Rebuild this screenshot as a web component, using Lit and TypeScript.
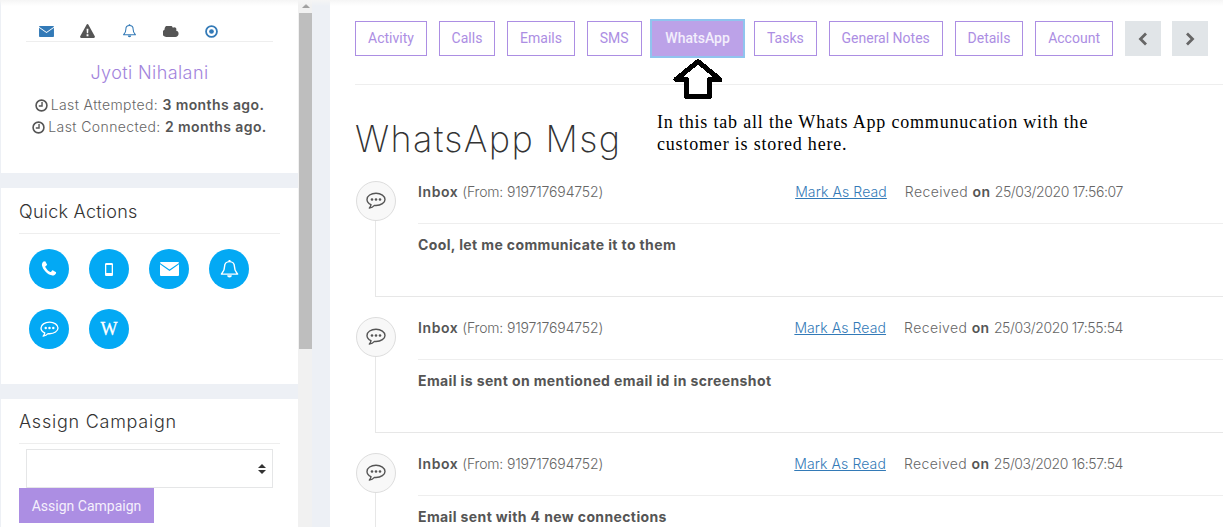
import { LitElement, html, css } from "lit";
import { customElement } from "lit/decorators.js";

const FA = {
  phone: "M1600 1240q0 27-10 70.5t-21 68.5q-21 50-122 106-94 51-186 51-27 0-53-3.5t-57.5-12.5-47-14.5-55.5-20.5-49-18q-98-35-175-83-127-79-264-216t-216-264q-48-77-83-175-3-9-18-49t-20.5-55.5-14.5-47-12.5-57.5-3.5-53q0-92 51-186 56-101 106-122 25-11 68.5-21t70.5-10q14 0 21 3 18 6 53 76 11 19 30 54t35 63.5 31 53.5q3 4 17.5 25t21.5 35.5 7 28.5q0 20-28.5 50t-62 55-62 53-28.5 46q0 9 5 22.5t8.5 20.5 14 24 11.5 19q76 137 174 235t235 174q2 1 19 11.5t24 14 20.5 8.5 22.5 5q18 0 46-28.5t53-62 55-62 50-28.5q14 0 28.5 7t35.5 21.5 25 17.5q25 15 53.5 31t63.5 35 54 30q70 35 76 53 3 7 3 21z",
  cloud: "M1792 1152q0 159-112.5 271.5t-271.5 112.5h-1088q-185 0-316.5-131.5t-131.5-316.5q0-132 71-241.5t187-163.5q-2-28-2-43 0-212 150-362t362-150q158 0 286.5 88t187.5 230q70-62 166-62 106 0 181 75t75 181q0 75-41 138 129 30 213 134.5t84 239.5z",
};

const envelope = (cls: string) => html`<svg class=${cls} viewBox="0 0 19 14"><path fill="currentColor" d="M1 0H18a1 1 0 0 1 1 1L9.500 7.600 0 1a1 1 0 0 1 1-1zM0 2.300L9.500 8.900 19 2.300V13a1 1 0 0 1-1 1H1a1 1 0 0 1-1-1z"></path></svg>`;
const phone = html`<svg class="qi" viewBox="0 0 1792 1792"><path fill="currentColor" d=${FA.phone}></path></svg>`;
const cloud = html`<svg class="tc" viewBox="0 250 1792 1300"><path fill="currentColor" d=${FA.cloud}></path></svg>`;
const bell = (cls: string) => html`<svg class=${cls} viewBox="0 0 20 20"><path fill="none" stroke="currentColor" stroke-width="1.500" stroke-linejoin="round" d="M10 2.200c-3.200 0-5.200 2.400-5.200 5.200 0 5-2.600 6.800-3.300 8h17c-.7-1.200-3.300-3-3.300-8 0-2.800-2-5.200-5.200-5.200z"></path><path fill="currentColor" d="M9 .5h2v2.200H9zM7.500 16.500h5a2.500 2.500 0 0 1-5 0z"></path></svg>`;
const warning = html`<svg class="ti" viewBox="0 0 16 15"><path fill="currentColor" fill-rule="evenodd" d="M8 0c.5 0 .8.300 1 .7l6.800 12.500c.4.800-.1 1.800-1 1.800H1.200c-.9 0-1.400-1-1-1.800L7 .7C7.200.300 7.500 0 8 0zM7 5l.3 5h1.400L9 5zM7 11v2h2v-2z"></path></svg>`;
const dot = html`<svg class="td" viewBox="0 0 16 16"><circle cx="8" cy="8" r="6.700" fill="none" stroke="currentColor" stroke-width="2.200"></circle><circle cx="8" cy="8" r="2.900" fill="currentColor"></circle></svg>`;
const clock = html`<svg class="clock" viewBox="0 0 12 12"><circle cx="6" cy="6" r="5" fill="none" stroke="currentColor" stroke-width="1.500"></circle><path d="M6.500 2.700v3.800H3.500" fill="none" stroke="currentColor" stroke-width="1.300"></path></svg>`;
const mobile = html`<svg class="mob" viewBox="0 0 8 13"><path fill="currentColor" fill-rule="evenodd" d="M1.300 0h5.400C7.400 0 8 .6 8 1.300v10.400c0 .7-.6 1.300-1.300 1.300H1.300C.6 13 0 12.400 0 11.700V1.300C0 .6.600 0 1.300 0zM1.300 2v8h5.400V2z"></path></svg>`;
const comment = (cls: string) => html`<svg class=${cls} viewBox="0 0 20 18"><path fill="none" stroke="currentColor" stroke-width="1.400" stroke-linejoin="round" d="M10 1.200c-5 0-9 2.800-9 6.200 0 2.200 1.600 4.100 4 5.200-.2 1.400-.8 2.500-1.700 3.500 2-.3 3.900-1.300 5.100-2.700.5.100 1 .1 1.600.1 5 0 9-2.800 9-6.100s-4-6.200-9-6.200z"></path><circle cx="6" cy="7.500" r="1.300" fill="currentColor"></circle><circle cx="10" cy="7.500" r="1.300" fill="currentColor"></circle><circle cx="14" cy="7.500" r="1.300" fill="currentColor"></circle></svg>`;

const tabs = ["Activity", "Calls", "Emails", "SMS", "WhatsApp", "Tasks", "General Notes", "Details", "Account"];
const msgs = [
  { body: "Cool, let me communicate it to them", time: "25/03/2020 17:56:07" },
  { body: "Email is sent on mentioned email id in screenshot", time: "25/03/2020 17:55:54" },
  { body: "Email sent with 4 new connections", time: "25/03/2020 16:57:54" },
];

@customElement("app-root")
export class AppRoot extends LitElement {
  static styles = css`
    :host { display: block; position: relative; width: 1223px; height: 527px; overflow: hidden; background: #edf0f5; font-family: Inter, "Liberation Sans", sans-serif; color: #666; }
    .fade { position: absolute; left: 0; right: 0; top: 0; height: 6px; background: linear-gradient(#f5f5f5, rgba(255,255,255,0)); pointer-events: none; }
    .page { display: grid; grid-template-columns: 297px 14px 1fr; height: 527px; padding-left: 1px; box-sizing: border-box; }
    .side { display: flex; flex-direction: column; gap: 15px; height: 527px; overflow: hidden; }
    .card { background: #fff; flex: none; box-sizing: border-box; }
    .c1 { height: 173px; padding: 24px 25px 0; text-align: center; }
    .c2 { height: 196px; padding: 0 18px; }
    .c3 { flex: 1; padding: 0 18px; }
    .topicons { display: flex; height: 14px; padding-bottom: 3px; border-bottom: 1px solid #eee; align-items: center; }
    .topicons > div { width: 41.3px; display: flex; justify-content: center; align-items: center; }
    .ti { width: 15px; height: 14px; }
    .te { width: 15px; height: 11px; }
    .tc { width: 16px; height: 11px; }
    .td { width: 13px; height: 13px; }
    .blue { color: #337ab7; }
    .grey { color: #555; }
    .name { margin: 18px 0 0; font-size: 18px; line-height: 26px; font-weight: 300; color: #a283dc; letter-spacing: 0.4px; }
    .seen { margin: 8px 0 0; font-size: 14px; line-height: 22px; font-weight: 300; color: #666; white-space: nowrap; letter-spacing: 0.4px; }
    .seen b { font-weight: 600; color: #555; }
    .clock { width: 13px; height: 13px; vertical-align: -2px; color: #555; margin-right: 3px; }
    h4 { margin: 0; font-size: 18px; font-weight: 300; color: #333; white-space: nowrap; border-bottom: 1px solid #eee; }
    .hq { line-height: 48px; height: 45px; letter-spacing: 0.25px; }
    .ha { line-height: 46px; height: 44px; letter-spacing: 0.75px; }
    .quick { display: grid; grid-template-columns: repeat(4, 40px); gap: 20px; padding: 15px 0 0 10px; }
    .q { width: 40px; height: 40px; border-radius: 50%; background: #03a9f4; color: #fff; display: flex; align-items: center; justify-content: center; font: 400 18px "Liberation Serif", serif; -webkit-text-stroke: 0.3px #fff; }
    .qi { width: 18px; height: 18px; }
    .qb { width: 19px; height: 20px; }
    .qe { width: 19px; height: 14px; }
    .mob { width: 8px; height: 13px; }
    .qc { width: 19px; height: 17px; }
    .selbox { position: relative; margin: 5px 7px 0; height: 39px; }
    select { display: block; width: 100%; height: 39px; appearance: none; background: #fff; border: 1px solid #e5e6e7; border-radius: 0; }
    .sort { position: absolute; right: 7px; top: 15px; width: 8px; height: 10px; color: #333; pointer-events: none; }
    .assign { display: block; width: 135px; height: 35px; margin: 0; border: 0; background: #ac8ee3; color: #f5f0fc; font: 14px Roboto, sans-serif; padding: 0; }
    .track { background: #f1f1f1; position: relative; }
    .thumb { position: absolute; left: 1px; width: 13px; top: 13px; height: 336px; background: #bebebe; }
    .up { position: absolute; left: 4px; top: 4px; border: 4px solid transparent; border-top: 0; border-bottom-color: #a0a0a0; }
    .main { background: #fff; margin-left: 18px; padding-left: 25px; position: relative; overflow: hidden; min-width: 0; }
    .tabs { display: flex; align-items: center; gap: 11.75px; height: 85px; padding-bottom: 7px; box-sizing: border-box; border-bottom: 1px solid #eee; }
    .tab { box-sizing: border-box; height: 35px; padding: 0 12px; border: 1px solid #ac8ee3; color: #ac8ee3; background: #fff; font: 14px/33px Roboto, sans-serif; white-space: nowrap; }
    .tab.on { height: 39px; margin: 0 -2.5px 0 -3px; padding: 0 13px; border: 2px solid #90c4ee; background: #bca2e8; color: #f3eefc; font-weight: 500; line-height: 35px; }
    .nav { width: 36px; height: 35px; background: #e1e5e8; display: flex; align-items: center; justify-content: center; color: #666; }
    .nav svg { width: 10px; height: 14px; }
    h1 { margin: 0; font-size: 36px; font-weight: 200; line-height: 50px; color: #333; padding-top: 29px; height: 96px; box-sizing: border-box; letter-spacing: 1.35px; white-space: nowrap; }
    .panel { position: relative; margin-left: 20px; height: 116px; box-sizing: border-box; border-left: 1px solid #e7e7e7; border-bottom: 1px solid #e7e7e7; padding-left: 42px; margin-bottom: 20px; }
    .bubble { position: absolute; left: -20px; top: 0; width: 40px; height: 40px; box-sizing: border-box; border-radius: 50%; border: 1px solid #ddd; background: #f8f8f8; color: #555; display: flex; align-items: center; justify-content: center; }
    .bi { width: 20px; height: 18px; }
    .head { display: flex; justify-content: space-between; height: 43px; line-height: 22px; font-size: 14px; padding-right: 100px; font-weight: 300; white-space: nowrap; border-bottom: 1px solid #eee; box-sizing: border-box; }
    .head b { font-weight: 600; color: #555; }
    .from { letter-spacing: -0.15px; }
    .from b { letter-spacing: 0.6px; }
    .rec { display: flex; gap: 18px; }
    .when { letter-spacing: 0.4px; }
    .date { letter-spacing: -0.4px; }
    a { color: #337ab7; text-decoration: underline; letter-spacing: 0.1px; }
    .body { font-size: 14px; font-weight: 700; color: #555; line-height: 22px; margin-top: 10px; white-space: nowrap; letter-spacing: 0.38px; }
    .note { position: absolute; left: 327px; top: 111px; width: 480px; font: 18px/22px "Liberation Serif", serif; color: #000; letter-spacing: 0.81px; }
    .arrow { position: absolute; left: 341px; top: 57px; width: 54px; height: 46px; }
  `;

  render() {
    return html`
      <div class="page">
        <div class="side">
          <section class="card c1">
            <div class="topicons">
              <div class="blue">${envelope("te")}</div>
              <div class="grey">${warning}</div>
              <div class="blue">${bell("ti")}</div>
              <div class="grey">${cloud}</div>
              <div class="blue">${dot}</div>
            </div>
            <p class="name">Jyoti Nihalani</p>
            <div class="seen">
              <div>${clock}Last Attempted: <b>3 months ago.</b></div>
              <div>${clock}Last Connected: <b>2 months ago.</b></div>
            </div>
          </section>
          <section class="card c2">
            <h4 class="hq">Quick Actions</h4>
            <div class="quick">
              <div class="q">${phone}</div>
              <div class="q">${mobile}</div>
              <div class="q">${envelope("qe")}</div>
              <div class="q">${bell("qb")}</div>
              <div class="q">${comment("qc")}</div>
              <div class="q">W</div>
            </div>
          </section>
          <section class="card c3">
            <h4 class="ha">Assign Campaign</h4>
            <div class="selbox">
              <select></select>
              <svg class="sort" viewBox="0 0 8 10"><path fill="currentColor" d="M4 0l4 4H0zM4 10L0 6h8z"></path></svg>
            </div>
            <button class="assign">Assign Campaign</button>
          </section>
        </div>
        <div class="track"><div class="up"></div><div class="thumb"></div></div>
        <main class="main">
          <div class="tabs">
            ${tabs.map((t) => html`<div class="tab ${t === "WhatsApp" ? "on" : ""}">${t}</div>`)}
            <div class="nav"><svg viewBox="0 0 10 14"><path d="M8 1.500L2.500 7 8 12.500" fill="none" stroke="currentColor" stroke-width="2.800"></path></svg></div>
            <div class="nav"><svg viewBox="0 0 10 14"><path d="M2 1.500L7.500 7 2 12.500" fill="none" stroke="currentColor" stroke-width="2.800"></path></svg></div>
          </div>
          <h1>WhatsApp Msg</h1>
          ${msgs.map((m) => html`
            <article class="panel">
              <div class="bubble">${comment("bi")}</div>
              <div class="head">
                <span class="from"><b>Inbox</b> (From: 919717694752)</span>
                <span class="rec"><a>Mark As Read</a><span class="when">Received <b>on</b> <span class="date">${m.time}</span></span></span>
              </div>
              <div class="body">${m.body}</div>
            </article>`)}
          <svg class="arrow" viewBox="0 0 54 46" shape-rendering="crispEdges">
            <path d="M27 4.500L5 22.500H15.500V39.500H38.500V22.500H49z" fill="#fff" stroke="#000" stroke-width="5" stroke-linejoin="round"></path>
          </svg>
          <div class="note">In this tab all the Whats App communucation with the<br />customer is stored here.</div>
        </main>
      </div>
      <div class="fade"></div>
    `;
  }
}
